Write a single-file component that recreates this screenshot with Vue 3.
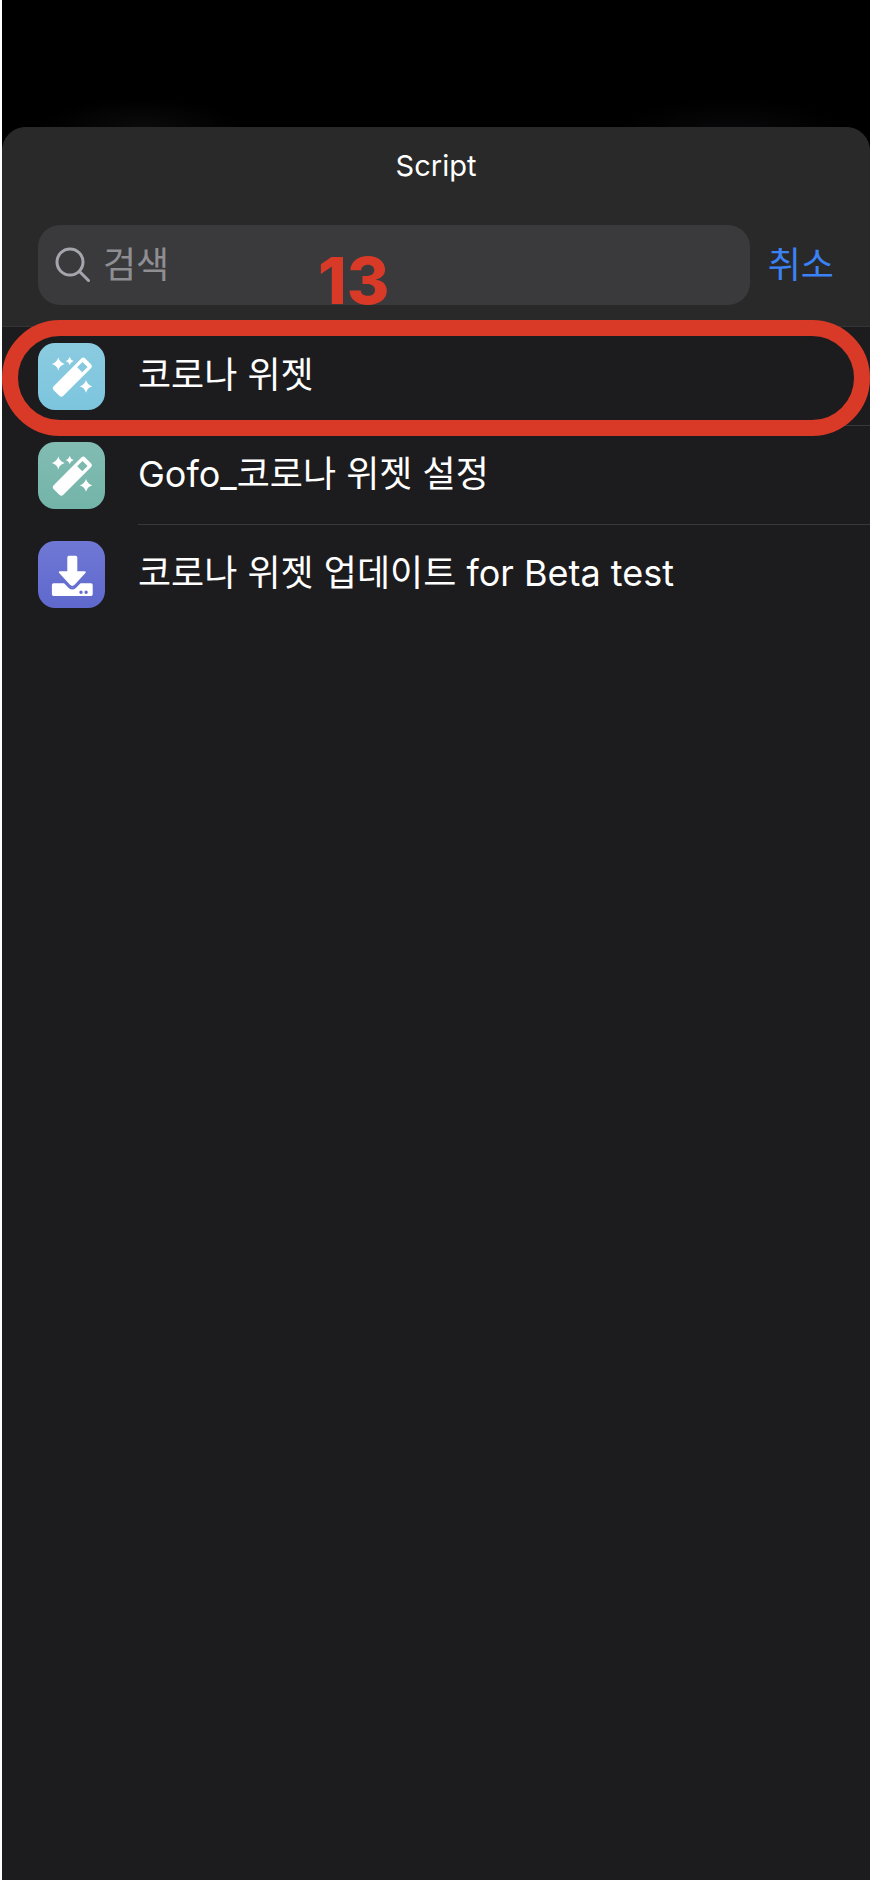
<script setup>
import { ref } from 'vue'

const query = ref('')
const scripts = [
  { name: '코로나 위젯', tone: 'sky', icon: 'wand', marked: true },
  { name: 'Gofo_코로나 위젯 설정', tone: 'teal', icon: 'wand', marked: false },
  { name: '코로나 위젯 업데이트 for Beta test', tone: 'indigo', icon: 'download', marked: false },
]
</script>

<template>
  <div class="screen">
    <main class="sheet">
      <header class="head">
        <h1 class="title">Script</h1>
        <form class="search-row" @submit.prevent>
          <label class="search">
            <svg class="glass" viewBox="0 0 36 36" aria-hidden="true">
              <circle cx="15" cy="15" r="13" />
              <path d="M24.5 24.5 33.5 33.5" />
            </svg>
            <input v-model="query" type="text" placeholder="검색" aria-label="검색" />
          </label>
          <button class="cancel" type="button">취소</button>
        </form>
        <span class="step">13</span>
      </header>

      <ul class="list">
        <li v-for="item in scripts" :key="item.name" class="item">
          <button class="row" type="button">
            <span class="tile" :class="item.tone">
              <svg v-if="item.icon === 'wand'" viewBox="0 0 67 67" aria-hidden="true">
                <g transform="translate(34.3 34.2) rotate(-45)">
                  <path
                    fill-rule="evenodd"
                    d="M-19.5-6.8H19.5Q22.3-6.8 22.3-4V4Q22.3 6.8 19.5 6.8H-19.5Q-22.3 6.8-22.3 4V-4Q-22.3-6.8-19.5-6.8ZM10.5-3.6V3.6H18V-3.6Z"
                  />
                </g>
                <path d="M20.3 14.6Q21.7 19.6 26.7 21 21.7 22.4 20.3 27.4 18.9 22.4 13.9 21 18.9 19.6 20.3 14.6Z" />
                <path d="M31.7 14Q32.6 17.1 35.7 18 32.6 18.9 31.7 22 30.8 18.9 27.7 18 30.8 17.1 31.7 14Z" />
                <path d="M48 36.9Q49.4 41.9 54.4 43.3 49.4 44.7 48 49.7 46.6 44.7 41.6 43.3 46.6 41.9 48 36.9Z" />
              </svg>
              <svg v-else viewBox="0 0 67 67" aria-hidden="true">
                <path
                  d="M31 14.7H37.6Q39.3 14.7 39.3 16.4V30.3H46.6Q48.6 30.5 47.4 32.1L36.6 43.8Q34.3 46 32 43.8L21.2 32.1Q20 30.5 22 30.3H29.3V16.4Q29.3 14.7 31 14.7Z"
                />
                <path
                  fill-rule="evenodd"
                  d="M15.6 42.3H28.3L31.3 45.5Q34.3 48.2 37.3 45.5L40.3 42.3H53Q54.7 42.3 54.7 44V53.3Q54.7 55 53 55H15.6Q13.9 55 13.9 53.3V44Q13.9 42.3 15.6 42.3ZM41.3 51.3a1.7 1.7 0 1 0 3.4 0a1.7 1.7 0 1 0-3.4 0ZM46.4 51.3a1.7 1.7 0 1 0 3.4 0a1.7 1.7 0 1 0-3.4 0Z"
                />
                <path class="gap" d="M26.8 41.6 31.4 46.3Q34.3 48.8 37.2 46.3L41.8 41.6" />
              </svg>
            </span>
            <span class="name">{{ item.name }}</span>
          </button>
          <span v-if="item.marked" class="ring"></span>
        </li>
      </ul>
    </main>
  </div>
</template>

<style>
body {
  background: #fff;
}
</style>

<style scoped>
.screen {
  box-sizing: border-box;
  min-height: 100vh;
  margin: 0 2px;
  padding-top: 127px;
  display: flex;
  flex-direction: column;
  background:
    radial-gradient(ellipse 100px 28px at 16% 127px, #0b0b0b, transparent),
    radial-gradient(ellipse 110px 28px at 84% 127px, #08080a, transparent),
    #000;
  color: #fff;
  font-family: Inter, "Noto Sans CJK KR", sans-serif;
}

.sheet {
  flex: 1;
  border-radius: 24px 24px 0 0;
  overflow: hidden;
  background: #1c1c1e;
}

.head {
  position: relative;
  padding: 20px 36px 21px;
  background: #292929;
  border-bottom: 1px solid #343436;
}

.title {
  margin: 0 0 40px;
  font-size: 29px;
  line-height: 38px;
  font-weight: 400;
  text-align: center;
}

.search-row {
  display: flex;
  align-items: center;
  gap: 18px;
}

.search {
  flex: 1;
  min-width: 0;
  height: 80px;
  box-sizing: border-box;
  padding: 0 17px;
  display: flex;
  align-items: center;
  gap: 12px;
  border-radius: 22px;
  background: #3a3a3d;
}

.glass {
  flex: none;
  width: 36px;
  height: 36px;
  fill: none;
  stroke: #a5a5ad;
  stroke-width: 3;
  stroke-linecap: round;
}

input {
  flex: 1;
  min-width: 0;
  padding: 0;
  border: 0;
  outline: 0;
  background: transparent;
  color: #fff;
  font: inherit;
  font-size: 36px;
  line-height: 52px;
}

input::placeholder {
  color: #8e8e93;
  opacity: 1;
}

button {
  padding: 0;
  border: 0;
  background: none;
  color: inherit;
  font: inherit;
  font-size: 36px;
  line-height: 52px;
  cursor: pointer;
}

.cancel {
  color: #3b82f7;
}

/* Step number laid over the search field */
.step {
  position: absolute;
  top: 120px;
  left: 316px;
  color: #d93a27;
  font-family: Inter, sans-serif;
  font-size: 65px;
  line-height: 68px;
  font-weight: 800;
  pointer-events: none;
}

.list {
  margin: 0;
  padding: 0;
  list-style: none;
}

.item {
  position: relative;
}

.row {
  position: relative;
  width: 100%;
  height: 99px;
  padding-left: 36px;
  display: flex;
  align-items: center;
  gap: 33px;
  text-align: left;
}

.tile {
  flex: none;
  width: 67px;
  height: 67px;
  border-radius: 17px;
}

.tile svg {
  display: block;
  fill: #fff;
}

.tile .gap {
  fill: none;
  stroke: #656ed0;
  stroke-width: 2;
}

.sky {
  background: linear-gradient(#8bcbe0, #7cc5de);
}

.teal {
  background: linear-gradient(#82bcb3, #73b4a9);
}

.indigo {
  background: linear-gradient(#6f78d4, #5f69cd);
}

.name {
  flex: 1;
  height: 99px;
  box-sizing: border-box;
  line-height: 96px;
  border-bottom: 1px solid #38383a;
  white-space: nowrap;
}

.item:last-child .name {
  border-bottom-color: transparent;
}

/* Highlight drawn around the chosen script */
.ring {
  position: absolute;
  z-index: 1;
  inset: -7px 0 -10px;
  border: 16px solid #d93a27;
  border-radius: 60px;
  pointer-events: none;
}
</style>
